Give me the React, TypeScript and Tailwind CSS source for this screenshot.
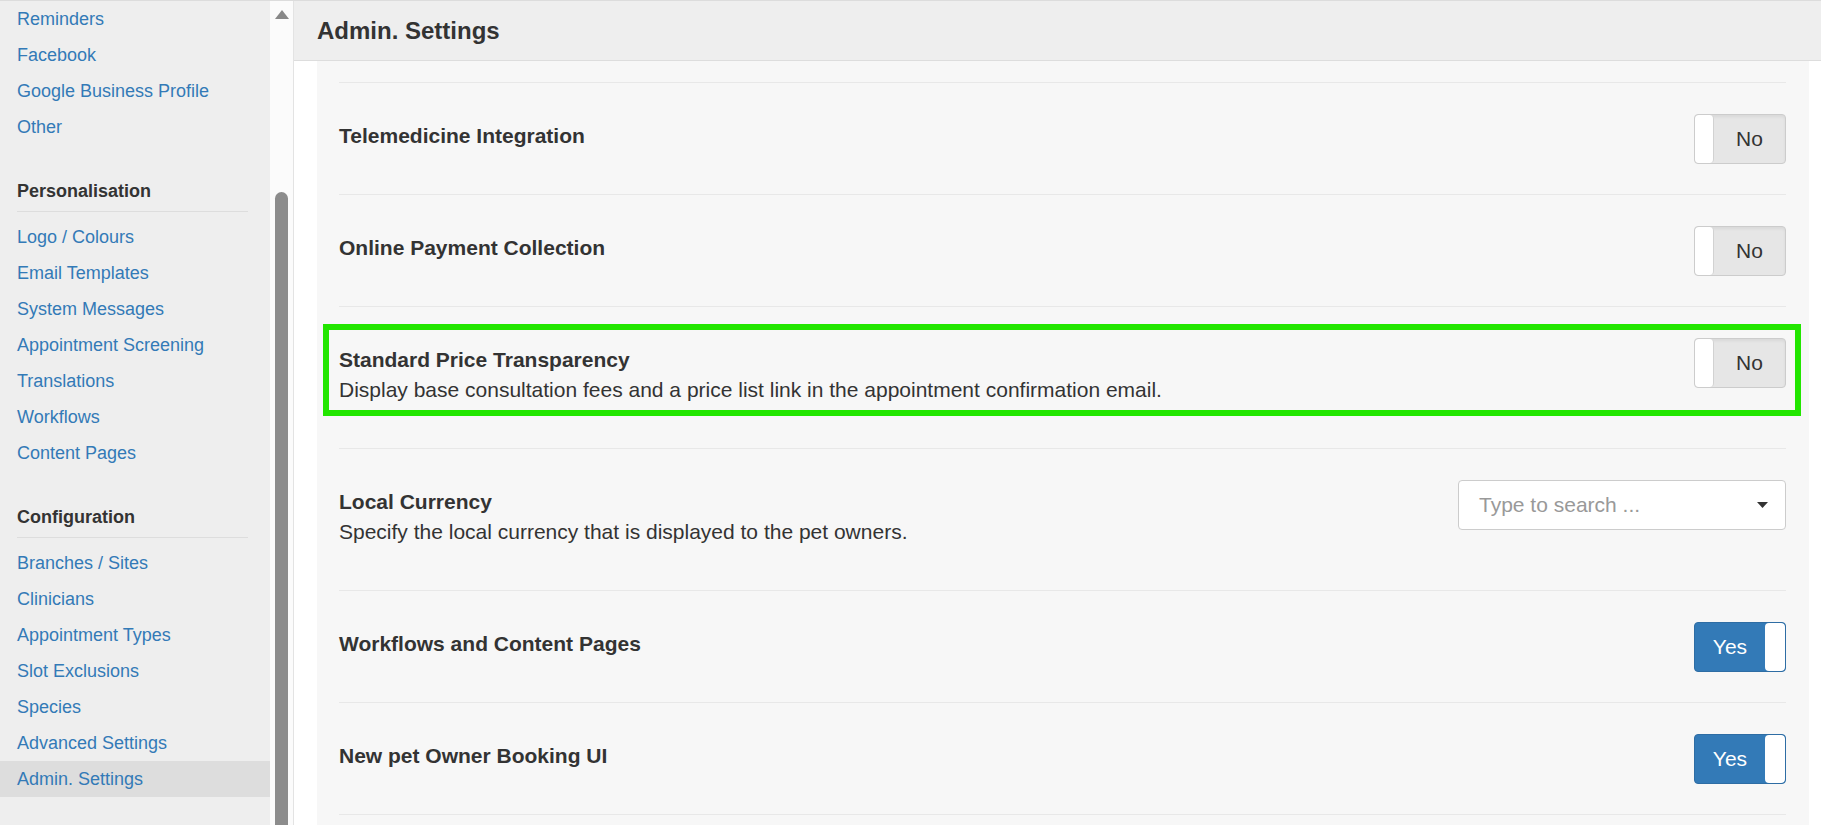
import React from "react";

type NavSection = {
  heading?: string;
  items: string[];
};

const sections: NavSection[] = [
  { items: ["Reminders", "Facebook", "Google Business Profile", "Other"] },
  {
    heading: "Personalisation",
    items: [
      "Logo / Colours",
      "Email Templates",
      "System Messages",
      "Appointment Screening",
      "Translations",
      "Workflows",
      "Content Pages",
    ],
  },
  {
    heading: "Configuration",
    items: [
      "Branches / Sites",
      "Clinicians",
      "Appointment Types",
      "Slot Exclusions",
      "Species",
      "Advanced Settings",
      "Admin. Settings",
    ],
  },
];

const ACTIVE = "Admin. Settings";

function Sidebar() {
  return (
    <aside className="w-[270px] shrink-0 bg-[#eee]">
      {sections.map((section, i) => (
        <div key={i}>
          {section.heading && (
            <div className="mx-[17px] mt-[36px] mb-[7px] w-[231px] border-b border-[#ddd] pb-[10px] text-[18px] leading-[20px] font-bold text-[#333]">
              {section.heading}
            </div>
          )}
          {section.items.map((item) => (
            <a
              key={item}
              href="#"
              className={`flex h-[36px] items-center pl-[17px] text-[18px] text-[#337ab7] ${
                item === ACTIVE ? "bg-[#ddd]" : ""
              }`}
            >
              {item}
            </a>
          ))}
        </div>
      ))}
    </aside>
  );
}

function ScrollTrack() {
  return (
    <div className="flex w-[24px] shrink-0 flex-col items-center border-r border-[#e3e3e3] bg-[#fbfbfb] pt-[9px]">
      <svg width="14" height="9" viewBox="0 0 14 9">
        <path d="M7 0 L14 9 L0 9 Z" fill="#888" />
      </svg>
      <div className="mt-[173px] w-[13px] flex-1 rounded-t-[7px] bg-[#8c8c8c]" />
    </div>
  );
}

function Toggle({ on }: { on: boolean }) {
  if (on) {
    return (
      <div className="flex h-[50px] w-[92px] shrink-0 overflow-hidden rounded-[4px] border border-[#2e6da4] bg-[#337ab7]">
        <span className="flex flex-1 items-center justify-center text-[21px] text-white">
          Yes
        </span>
        <span className="w-[20px] rounded-[4px] bg-white" />
      </div>
    );
  }
  return (
    <div className="flex h-[50px] w-[92px] shrink-0 overflow-hidden rounded-[4px] border border-[#ccc] bg-[#e6e6e6] shadow-[inset_0_2px_3px_rgba(0,0,0,0.06)]">
      <span className="w-[19px] rounded-[4px] border-r border-[#d2d2d2] bg-white" />
      <span className="flex flex-1 items-center justify-center text-[21px] text-[#333]">
        No
      </span>
    </div>
  );
}

function CurrencySelect() {
  return (
    <div className="flex h-[50px] w-[328px] shrink-0 items-center justify-between rounded-[4px] border border-[#ccc] bg-white pr-[17px] pl-[20px]">
      <span className="text-[21px] text-[#999]">Type to search ...</span>
      <svg width="11" height="6" viewBox="0 0 11 6">
        <path d="M0 0 L11 0 L5.5 6 Z" fill="#333" />
      </svg>
    </div>
  );
}

type Setting = {
  title: string;
  description?: string;
  control: React.ReactNode;
  highlight?: boolean;
};

const settings: Setting[] = [
  { title: "Telemedicine Integration", control: <Toggle on={false} /> },
  { title: "Online Payment Collection", control: <Toggle on={false} /> },
  {
    title: "Standard Price Transparency",
    description:
      "Display base consultation fees and a price list link in the appointment confirmation email.",
    control: <Toggle on={false} />,
    highlight: true,
  },
  {
    title: "Local Currency",
    description: "Specify the local currency that is displayed to the pet owners.",
    control: <CurrencySelect />,
  },
  { title: "Workflows and Content Pages", control: <Toggle on /> },
  { title: "New pet Owner Booking UI", control: <Toggle on /> },
];

function SettingRow({ setting }: { setting: Setting }) {
  return (
    <div className="relative flex items-start justify-between border-t border-[#e8e8e8] pt-[31px] pb-[30px]">
      {setting.highlight && (
        <div className="pointer-events-none absolute top-[17px] -right-[15px] bottom-[32px] -left-[16px] border-[6px] border-[#22e600]" />
      )}
      <div className="pt-[10px]">
        <div className="text-[21px] leading-[24px] font-bold text-[#333]">
          {setting.title}
        </div>
        {setting.description && (
          <div className="mt-[6px] mb-[16px] text-[21px] leading-[24px] text-[#333]">
            {setting.description}
          </div>
        )}
      </div>
      {setting.control}
    </div>
  );
}

export default function App() {
  return (
    <div className="flex h-[825px] w-full overflow-hidden border-t border-[#dcdcdc] bg-white font-['Liberation_Sans',Arial,sans-serif]">
      <Sidebar />
      <ScrollTrack />
      <main className="flex min-w-0 flex-1 flex-col">
        <header className="flex h-[60px] shrink-0 items-center border-b border-[#ddd] bg-[#eee] pl-[23px]">
          <h1 className="text-[24px] font-bold text-[#333]">Admin. Settings</h1>
        </header>
        <div className="flex-1 pr-[12px] pl-[23px]">
          <div className="h-full bg-[#f7f7f7] pt-[21px] pr-[23px] pl-[22px]">
            {settings.map((s) => (
              <SettingRow key={s.title} setting={s} />
            ))}
            <div className="border-t border-[#e8e8e8]" />
          </div>
        </div>
      </main>
    </div>
  );
}
